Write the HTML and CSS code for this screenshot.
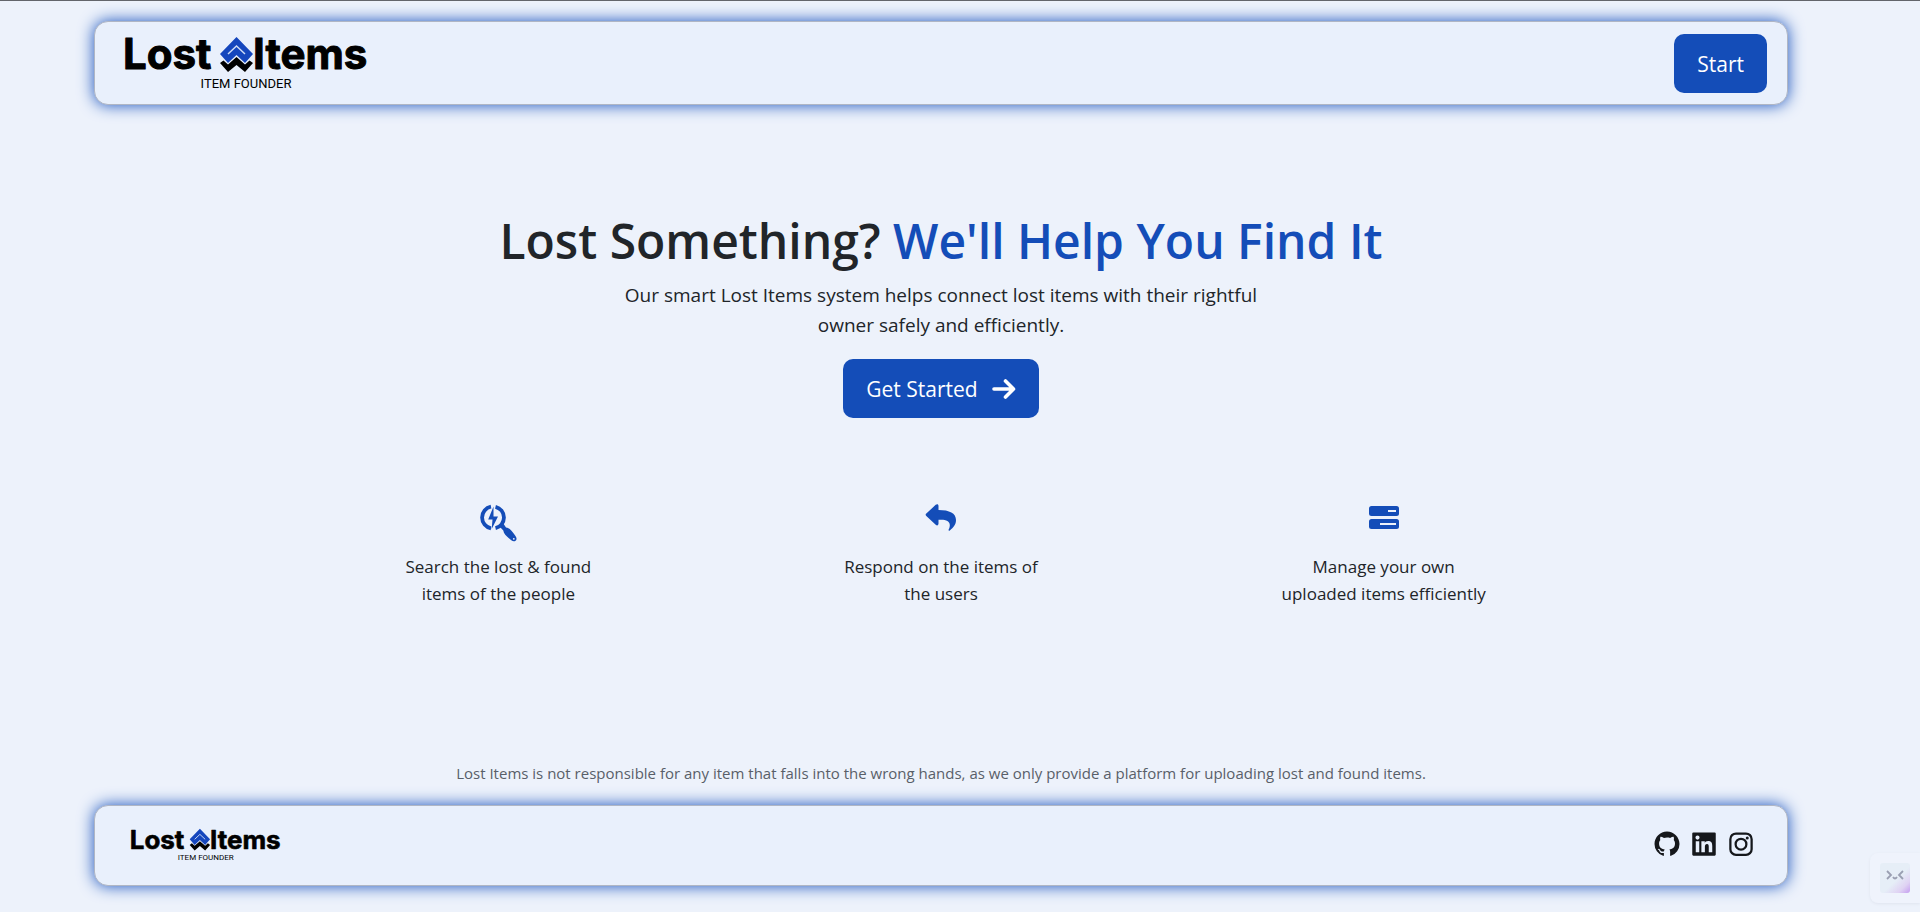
FILE: index.html
```html
<!DOCTYPE html>
<html lang="en">
<head>
<meta charset="utf-8">
<meta name="viewport" content="width=device-width, initial-scale=1">
<title>Lost Items</title>
<link rel="stylesheet" href="styles.css">
</head>
<body>
<div class="page">
  <header class="bar bar-top">
    <a class="brand" href="#" aria-label="Lost Items, item founder">
      <svg class="logo-large" viewBox="0 0 246 56">
        <text class="logo-word" x="-2" y="33">Lost</text>
        <text class="logo-word" x="128" y="33">Items</text>
        <path d="M95 27l3.500-2.500 4.500 4 8.500-7.500 8.500 7.500 4.500-4L128 27l-8 9-8.500-7-8.500 7z" fill="#000"/>
        <path d="M111.500 1L128 18l-8 9-8.500-8-8.500 8-8-9z" fill="#1546bd"/>
        <path d="M103 18l8.500-8 8.500 8" fill="none" stroke="#cfdcf6" stroke-width="1.500"/>
        <text class="logo-tag" x="121" y="52" text-anchor="middle">ITEM FOUNDER</text>
      </svg>
    </a>
    <button class="btn" type="button">Start</button>
  </header>

  <main class="main">
    <section class="hero">
      <h1 class="title">Lost Something? <span class="accent">We'll Help You Find It</span></h1>
      <p class="lead">Our smart Lost Items system helps connect lost items with their rightful owner safely and efficiently.</p>
      <button class="btn" type="button">Get Started
        <svg class="btn-icon" viewBox="0 0 24 20" aria-hidden="true"><path d="M2 10h19M13.500 2L21.500 10l-8 8" fill="none" stroke="currentColor" stroke-width="3.600" stroke-linecap="round" stroke-linejoin="round"/></svg>
      </button>
    </section>
    <section class="features">
      <article class="feature">
        <svg class="feature-icon" viewBox="0 0 40 40" aria-hidden="true">
          <path d="M13 3.700A11 11 0 0 0 13 25.300M17.500 3.800A11 11 0 0 1 17.500 25.200" fill="none" stroke="currentColor" stroke-width="3.800"/>
          <path d="M15.500 3.500l-5.300 13h4.300l-.8 9.500 6.300-12.500h-4.500z" fill="currentColor"/>
          <path d="M21.500 23.500l3.500-3.500 3 4.500c3.500.5 5.500 3 9.500 8.500 1.500 2.200 1.300 3.800 0 4.800-1.200.9-2.700.7-4.200-.6-5-4-7.500-6-8-9.700z" fill="currentColor"/>
          <circle cx="35.800" cy="35.800" r=".9" fill="#edf2fb"/>
        </svg>
        <p class="feature-text">Search the lost &amp; found items of the people</p>
      </article>
      <article class="feature">
        <svg class="feature-icon" viewBox="0 0 40 40" aria-hidden="true">
          <path d="M17.500 3c0-1.900-1.500-2.400-2.800-1.200L5.300 10.600c-.9.800-.9 1.600 0 2.400l9.400 8.700c1.300 1.300 2.800.7 2.800-1.100v-3.800c6.500-.5 11.500.5 11.300 5.700-.1 2.400-.9 3.500-1.200 4.200-.3.900.4 1.300 1.200.7 3.700-2.600 6.200-5.800 6.200-10.300C35 10.200 28.500 7 17.500 7z" fill="currentColor"/>
        </svg>
        <p class="feature-text">Respond on the items of the users</p>
      </article>
      <article class="feature">
        <svg class="feature-icon" viewBox="0 0 40 40" aria-hidden="true">
          <rect x="5" y="3" width="30" height="10" rx="2.500" fill="currentColor"/>
          <rect x="5" y="16" width="30" height="10" rx="2.500" fill="currentColor"/>
          <path d="M24 8h8M16 21h16" stroke="#edf2fb" stroke-width="2"/>
        </svg>
        <p class="feature-text">Manage your own uploaded items efficiently</p>
      </article>
    </section>
  </main>

  <p class="disclaimer">Lost Items is not responsible for any item that falls into the wrong hands, as we only provide a platform for uploading lost and found items.</p>

  <footer class="bar bar-bottom">
    <a class="brand" href="#" aria-label="Lost Items, item founder">
      <svg class="logo-small" viewBox="0 0 246 56">
        <text class="logo-word" x="-2" y="33">Lost</text>
        <text class="logo-word" x="128" y="33">Items</text>
        <path d="M95 27l3.500-2.500 4.500 4 8.500-7.500 8.500 7.500 4.500-4L128 27l-8 9-8.500-7-8.500 7z" fill="#000"/>
        <path d="M111.500 1L128 18l-8 9-8.500-8-8.500 8-8-9z" fill="#1546bd"/>
        <path d="M103 18l8.500-8 8.500 8" fill="none" stroke="#cfdcf6" stroke-width="1.500"/>
        <text class="logo-tag" x="121" y="52" text-anchor="middle">ITEM FOUNDER</text>
      </svg>
    </a>
    <nav class="social" aria-label="Social links">
      <a href="#" aria-label="GitHub"><svg class="social-icon" viewBox="0 0 24 24"><path fill="currentColor" d="M12 2C6.475 2 2 6.475 2 12a9.994 9.994 0 0 0 6.838 9.488c.5.087.687-.213.687-.476 0-.237-.013-1.024-.013-1.862-2.512.463-3.162-.612-3.362-1.175-.113-.288-.6-1.175-1.025-1.413-.35-.187-.85-.65-.013-.662.788-.013 1.350.725 1.538 1.025.9 1.512 2.338 1.087 2.912.825.088-.65.350-1.087.638-1.337-2.225-.25-4.550-1.113-4.550-4.938 0-1.088.387-1.987 1.025-2.688-.1-.25-.45-1.275.1-2.650 0 0 .837-.262 2.750 1.026a9.280 9.280 0 0 1 2.500-.338c.85 0 1.700.112 2.500.337 1.912-1.300 2.750-1.024 2.750-1.024.55 1.375.2 2.400.1 2.650.637.7 1.025 1.587 1.025 2.687 0 3.838-2.337 4.688-4.562 4.938.362.312.675.912.675 1.850 0 1.337-.013 2.412-.013 2.750 0 .262.188.574.688.474A10.016 10.016 0 0 0 22 12c0-5.525-4.475-10-10-10z"/></svg></a>
      <a href="#" aria-label="LinkedIn"><svg class="social-icon" viewBox="0 0 24 24"><path fill="currentColor" fill-rule="evenodd" d="M3.500 2.700h17a.9.9 0 0 1 .9.9v16.800a.9.900 0 0 1-.9.900h-17a.9.900 0 0 1-.9-.9V3.600a.9.900 0 0 1 .9-.9zM5.400 9.700v8.900h2.800V9.700zM6.800 5.200a1.650 1.650 0 1 0 0 3.300 1.650 1.650 0 0 0 0-3.300zM9.900 9.700v8.900h2.800v-4.400c0-1.200.3-2.300 1.700-2.300s1.400 1.300 1.400 2.400v4.300h2.800v-4.900c0-2.400-.5-4.200-3.300-4.200-1.400 0-2.300.7-2.600 1.400h-.1V9.700z"/></svg></a>
      <a href="#" aria-label="Instagram"><svg class="social-icon" viewBox="0 0 24 24" fill="none" stroke="currentColor" stroke-width="1.800"><rect x="3.500" y="3.600" width="17" height="17" rx="4.500"/><circle cx="12" cy="12.100" r="4.300"/><circle cx="17" cy="7.200" r="1.200" fill="currentColor" stroke="none"/></svg></a>
    </nav>
  </footer>
</div>
<button class="helper" type="button" aria-label="Open assistant">
  <span class="helper-face"><svg viewBox="0 0 30 30" fill="none" stroke="#9a9fb2" stroke-width="1.800"><path d="M7 8l4 4-4 4M23 8l-4 4 4 4M13 14q2 3 4 0"/></svg></span>
</button>
</body>
</html>
```
FILE: styles.css
```css
* { box-sizing: border-box; }

body {
  margin: 0;
  background: #edf2fb;
  border-top: 1px solid #63656b;
  color: #212529;
  font-family: "Segoe UI", "Open Sans", "Noto Sans", sans-serif;
}

h1, p { margin: 0; }

.page {
  display: flex;
  flex-direction: column;
  min-height: calc(100vh - 1px);
  padding: 20px 132px 26px 94px;
}

.bar {
  display: flex;
  align-items: center;
  justify-content: space-between;
  border: 1px solid #b0b6c4;
  border-radius: 14px;
  background: #e9f0fc;
  box-shadow: 0 0 16px #1650bc;
}

.bar-top { padding: 12px 20px 11px 30px; }
.bar-bottom { padding: 22px 31px 22px 36px; }

.brand { display: flex; color: #000; }
.logo-large { width: 246px; height: 56px; overflow: visible; }
.logo-small { width: 152px; height: 35px; overflow: visible; }

.logo-word {
  font: 700 42px Inter, sans-serif;
  stroke: #000;
  stroke-width: 1px;
  stroke-linejoin: round;
}

.logo-tag { font: 400 13px Roboto, sans-serif; }

.btn {
  display: inline-flex;
  align-items: center;
  justify-content: center;
  gap: 14px;
  height: 59px;
  padding: 0 23px;
  border: 0;
  border-radius: 10px;
  background: #144db8;
  color: #fff;
  font-family: inherit;
  font-size: 21px;
  cursor: pointer;
}

.btn-icon { width: 24px; height: 20px; }

.main { flex: 1; }

.hero {
  display: flex;
  flex-direction: column;
  align-items: center;
  padding-top: 106px;
  text-align: center;
}

.title {
  font-size: 48px;
  font-weight: 600;
  line-height: 60px;
}

.accent { color: #144db8; }

.lead {
  max-width: 660px;
  margin: 9px 0 19px;
  font-size: 19px;
  line-height: 30px;
}

.features {
  display: grid;
  grid-template-columns: repeat(3, 1fr);
  max-width: 1328px;
  margin: 85px auto 0;
}

.feature {
  display: flex;
  flex-direction: column;
  align-items: center;
  gap: 10px;
}

.feature-icon { width: 40px; height: 40px; color: #144db8; }

.feature-text {
  max-width: 212px;
  font-size: 17px;
  line-height: 27px;
  text-align: center;
}

.disclaimer {
  margin-bottom: 20px;
  color: #595f69;
  font-size: 15px;
  line-height: 24px;
  text-align: center;
}

.social { display: flex; gap: 7px; padding-bottom: 3px; }
.social a { display: flex; color: #15171b; }
.social-icon { width: 30px; height: 30px; }

.helper {
  position: fixed;
  right: 0;
  bottom: 9px;
  width: 50px;
  padding: 10px;
  border: 0;
  border-radius: 8px 0 0 8px;
  background: #eff3fc;
  box-shadow: 0 1px 3px #dfe4ef;
}

.helper-face {
  display: block;
  width: 30px;
  height: 30px;
  border-radius: 3px;
  background: linear-gradient(135deg, #e6eef7 55%, #dfd2f3 80%, #c49cf0);
}

.helper-face svg { display: block; }
```
